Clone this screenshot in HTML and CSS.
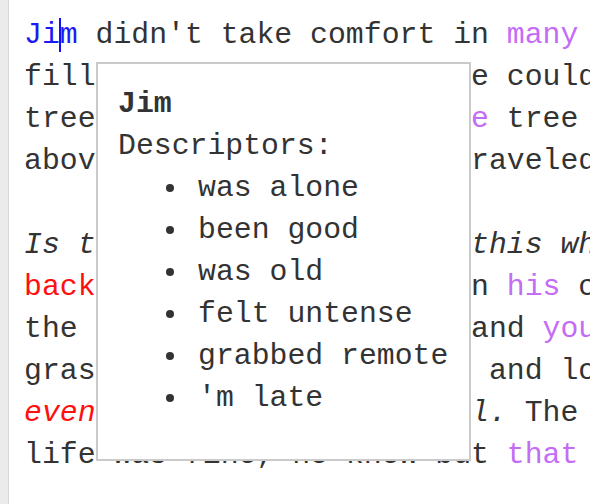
FILE: index.html
```html
<!DOCTYPE html>
<html>
<head>
<meta charset="utf-8">
<link rel="stylesheet" href="styles.css">
</head>
<body>
<div class="page">
  <div class="gutter"></div>
  <div class="editor">
    <div class="para">
      <div class="line"><span class="ent">Ji<span class="caret">m</span></span> didn't take comfort in <span class="fn">many</span> things, not anymore,</div>
      <div class="line">fill the empty hours as he could with small things,</div>
      <div class="line">trees grew, and he saw <span class="fn">the</span> tree outside sway gently</div>
      <div class="line">above him, as the birds traveled south for winter.</div>
    </div>
    <div class="para">
      <div class="line"><em>Is the world always like this what</em> he thought,</div>
      <div class="line"><span class="act">back</span> then, he wondered, in <span class="fn">his</span> chair by the window,</div>
      <div class="line">the quiet house was calm and <span class="fn">you</span> could hear the clock,</div>
      <div class="line">grasped the old TV remote and looked at it for a while,</div>
      <div class="line"><em><span class="act">even</span> if it was all so dull.</em> The days went on,</div>
      <div class="line">life was fine, he knew but <span class="fn">that</span> was not enough.</div>
    </div>
  </div>
</div>
<div class="tooltip">
  <div class="tt-title">Jim</div>
  <div class="tt-label">Descriptors:</div>
  <ul class="tt-list">
    <li>was alone</li>
    <li>been good</li>
    <li>was old</li>
    <li>felt untense</li>
    <li>grabbed remote</li>
    <li>'m late</li>
  </ul>
</div>
</body>
</html>
```

FILE: styles.css
```css
html, body {
  margin: 0;
  padding: 0;
  background: #ffffff;
  overflow: hidden;
}
body {
  width: 590px;
  height: 504px;
  font-family: "Liberation Mono", "Courier New", monospace;
  font-size: 29.8px;
  line-height: 42px;
  color: #333333;
}
.page {
  display: flex;
  height: 504px;
}
.gutter {
  flex: 0 0 8px;
  background: #ebebeb;
  border-right: 1px solid #d6d6d6;
}
.editor {
  flex: 1;
  padding: 14px 0 0 15px;
  overflow: hidden;
}
.para {
  margin-bottom: 42px;
}
.line {
  white-space: pre;
}
.ent {
  color: #1a1af5;
}
.fn {
  color: #c46cf6;
}
.act {
  color: #ff1010;
}
em {
  font-style: italic;
}
.caret {
  position: relative;
}
.caret::before {
  content: "";
  position: absolute;
  left: -1px;
  top: 0;
  bottom: 0;
  width: 2px;
  background: #1010ff;
}
.tooltip {
  position: absolute;
  left: 96px;
  top: 62px;
  width: 375px;
  height: 399px;
  box-sizing: border-box;
  border: 2px solid #cacaca;
  background: #ffffff;
  padding: 19px 0 0 20px;
}
.tt-title {
  font-weight: bold;
}
.tt-list {
  margin: 0;
  padding-left: 80px;
  list-style: none;
}
.tt-list li::before {
  content: "";
  display: inline-block;
  width: 8px;
  height: 8px;
  border-radius: 50%;
  background: #333333;
  margin-left: -32px;
  margin-right: 24px;
  vertical-align: middle;
}
```
